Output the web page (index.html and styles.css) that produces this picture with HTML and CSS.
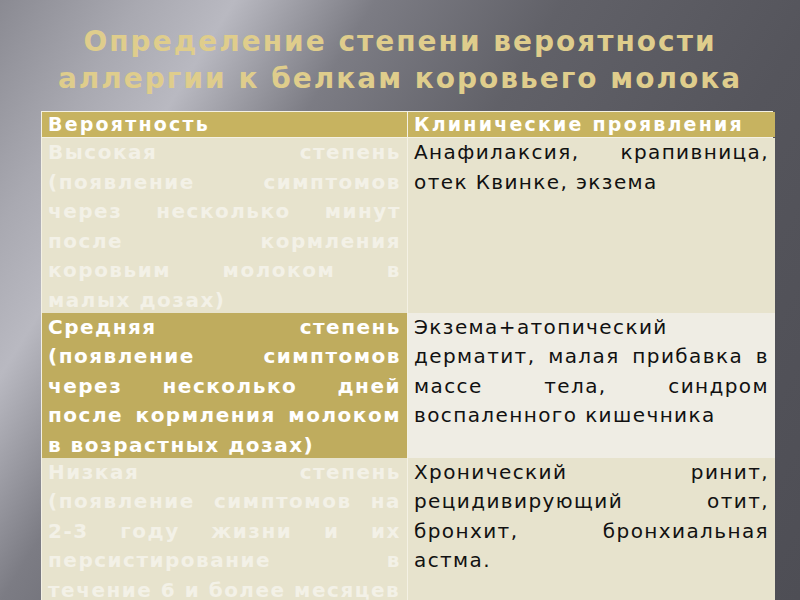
FILE: index.html
```html
<!DOCTYPE html>
<html lang="ru">
<head>
<meta charset="utf-8">
<link rel="stylesheet" href="styles.css">
</head>
<body>
<div class="slide">
  <h1 class="title">Определение степени вероятности<br>аллергии к белкам коровьего молока</h1>
  <div class="table">
    <div class="cell head">Вероятность</div>
    <div class="cell head">Клинические проявления</div>

    <div class="cell left light tight">Высокая степень (появление симптомов через несколько минут после кормления коровьим молоком в малых дозах)</div>
    <div class="cell right light tight">Анафилаксия, крапивница, отек Квинке, экзема</div>

    <div class="cell left gold tight">Средняя степень (появление симптомов через несколько дней после кормления молоком в возрастных дозах)</div>
    <div class="cell right pale tight">Экзема+атопический дерматит, малая прибавка в массе тела, синдром воспаленного кишечника</div>

    <div class="cell left light">Низкая степень (появление симптомов на 2-3 году жизни и их персистирование в течение 6 и более месяцев</div>
    <div class="cell right light">Хронический ринит, рецидивирующий отит, бронхит, бронхиальная астма.</div>
  </div>
</div>
</body>
</html>
```

FILE: styles.css
```css
html, body {
  margin: 0;
  padding: 0;
  width: 800px;
  height: 600px;
  overflow: hidden;
}
.slide {
  width: 800px;
  height: 600px;
  overflow: hidden;
  box-sizing: border-box;
  padding-top: 23px;
  background: linear-gradient(122deg, #8a8a92 0%, #a9a9b1 12%, #b9b9c1 20%, #7c7c84 32%, #616168 48%, #55555c 70%, #4e4e55 100%);
  font-family: "DejaVu Sans", Verdana, sans-serif;
}
.title {
  margin: 0;
  text-align: center;
  color: #dfcd8c;
  font-size: 28px;
  font-weight: bold;
  line-height: 37px;
  letter-spacing: 2px;
}
.table {
  margin: 14px 0 0 41px;
  width: 732px;
  display: grid;
  grid-template-columns: 365px 367px;
  background: #f4f1e4;
  gap: 1px;
  padding: 1px;
  box-sizing: border-box;
}
.cell {
  padding: 0 6px;
  text-align: justify;
  line-height: 29.6px;
}
.tight {
  margin-bottom: -4px;
}
.head {
  background: #c7b360;
  color: #ffffff;
  font-weight: bold;
  font-size: 19px;
  line-height: 25px;
  letter-spacing: 2.2px;
  text-align: left;
}
.left {
  font-weight: bold;
  font-size: 20px;
  letter-spacing: 1.5px;
  color: #ffffff;
}
.right {
  font-size: 20px;
  letter-spacing: 1.4px;
  color: #111111;
}
.light { background: #e7e3cd; }
.gold { background: #bfac5e; }
.pale { background: #efede4; }
.left.light { color: #f3f1e7; }
```
